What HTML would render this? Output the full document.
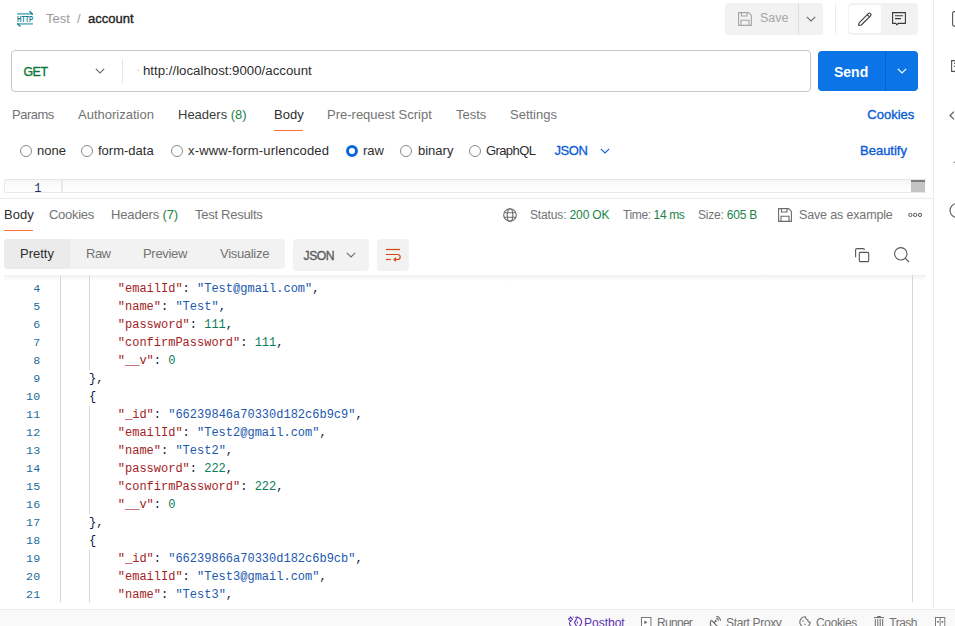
<!DOCTYPE html>
<html><head><meta charset="utf-8">
<style>
*{margin:0;padding:0;box-sizing:border-box}
html,body{width:955px;height:626px;overflow:hidden;background:#fff}
body{position:relative;font-family:"Liberation Sans",sans-serif;color:#212121}
.a{position:absolute}
.t{position:absolute;white-space:nowrap;line-height:1}
.f12{font-size:12px}
.f13{font-size:13px}
.gray{color:#737373}
.grn{color:#1a8348}
.blue{color:#0a5cd6}
svg{position:absolute;overflow:visible}
.code{position:absolute;left:0;top:0;font-family:"Liberation Mono",monospace;font-size:12px;line-height:18px;white-space:pre}
.k{color:#a32224}
.s{color:#2157ad}
.n{color:#0b7d58}
.p{color:#0b1b3f}
.ln{position:absolute;font-family:"Liberation Mono",monospace;font-size:11.6px;letter-spacing:0.25px;line-height:18px;color:#1b6c9e;text-align:right;width:40.4px;left:0}
</style></head>
<body>

<!-- ===== Top bar ===== -->
<svg style="left:12px;top:6px" width="26" height="24" viewBox="0 0 26 24">
  <rect x="5" y="6.9" width="15.9" height="1.9" fill="#78bac6"/>
  <path d="M17.6 5.2L20.6 8.4" stroke="#1f8394" stroke-width="1.5" fill="none"/>
  <text x="13" y="15.9" text-anchor="middle" font-family="Liberation Sans" font-size="8.3" font-weight="bold" fill="#137d8f" textLength="16" lengthAdjust="spacingAndGlyphs">HTTP</text>
  <rect x="5" y="16.9" width="15.9" height="1.9" fill="#78bac6"/>
  <path d="M5.3 17.4L8.4 20.6" stroke="#1f8394" stroke-width="1.5" fill="none"/>
</svg>
<div class="t f13" style="left:46px;top:12px;color:#9b9b9b">Test</div>
<div class="t f13" style="left:77px;top:12px;color:#9b9b9b">/</div>
<div class="t" style="left:88px;top:12px;font-size:13px;color:#212121;-webkit-text-stroke:0.35px #212121">account</div>

<!-- Save group -->
<div class="a" style="left:725px;top:3px;width:98px;height:32px;background:#f2f2f2;border-radius:4px"></div>
<div class="a" style="left:798px;top:3px;width:1px;height:32px;background:#e0e0e0"></div>
<svg style="left:738px;top:12px" width="14" height="14" viewBox="0 0 14 14">
  <g fill="none" stroke="#a6a6a6" stroke-width="1.1">
    <path d="M0.6 0.6H10.6L13.4 3.4V13.4H0.6Z"/>
    <path d="M3.5 0.6V4H9V0.6"/>
    <path d="M3 13.4V8.2H11V13.4"/>
  </g>
</svg>
<div class="t" style="left:760px;top:12.3px;font-size:12.5px;color:#a6a6a6">Save</div>
<svg style="left:806px;top:16px" width="10" height="6" viewBox="0 0 10 6"><path d="M0.8 0.8L5 5L9.2 0.8" fill="none" stroke="#6b6b6b" stroke-width="1.1"/></svg>
<div class="a" style="left:835px;top:3px;width:1px;height:32px;background:#ebebeb"></div>

<!-- edit/comment group -->
<div class="a" style="left:848px;top:3px;width:70px;height:32px;background:#f2f2f2;border-radius:4px"></div>
<div class="a" style="left:849px;top:5px;width:32px;height:28px;background:#fff;border-radius:3px"></div>
<svg style="left:858px;top:12px" width="14" height="14" viewBox="0 0 14 14">
  <g fill="none" stroke="#3a3a3a" stroke-width="1.1" stroke-linejoin="round">
    <path d="M0.6 13.4L1.1 10.8L10.3 1.6Q11.4 0.5 12.5 1.6Q13.6 2.7 12.5 3.8L3.3 13Z"/>
    <path d="M9.3 2.6L11.5 4.8"/>
  </g>
</svg>
<svg style="left:892px;top:12px" width="14" height="14" viewBox="0 0 14 14">
  <g fill="none" stroke="#3a3a3a" stroke-width="1.1">
    <path d="M0.6 0.6H13.4V11.4H6.2L5 12.8L3.8 11.4H0.6Z"/>
    <path d="M3 3.8H11M3 6.6H9"/>
  </g>
</svg>

<!-- right sidebar -->
<div class="a" style="left:933px;top:0;width:1px;height:609px;background:#ebebeb"></div>
<svg style="left:952px;top:11px" width="10" height="16" viewBox="0 0 10 16"><rect x="0.6" y="0.6" width="12" height="14.5" rx="1.5" fill="none" stroke="#555" stroke-width="1.1"/></svg>
<svg style="left:951px;top:60px" width="14" height="14" viewBox="0 0 14 14"><path d="M0.6 0.6H13.4V11.4H6.2L5 12.8L3.8 11.4H0.6Z M3 3.4H11 M3 6.4H9" fill="none" stroke="#555" stroke-width="1.1"/></svg>
<svg style="left:949px;top:111px" width="6" height="9" viewBox="0 0 6 9"><path d="M5 0.7L1 4.5L5 8.3" fill="none" stroke="#555" stroke-width="1.1"/></svg>
<svg style="left:952px;top:160px" width="4" height="4" viewBox="0 0 4 4"><path d="M1 3L3.5 0.8V3Z" fill="#888"/></svg>
<svg style="left:949px;top:203px" width="8" height="16" viewBox="0 0 8 16"><circle cx="8" cy="7.5" r="7" fill="none" stroke="#555" stroke-width="1.1"/></svg>

<!-- ===== URL bar ===== -->
<div class="a" style="left:11px;top:50px;width:800px;height:42px;border:1px solid #c6c6c6;border-radius:4px"></div>
<div class="t" style="left:23.4px;top:66px;font-size:12.3px;letter-spacing:-0.35px;color:#0b7a3a;-webkit-text-stroke:0.4px #0b7a3a">GET</div>
<svg style="left:95px;top:68px" width="10" height="6" viewBox="0 0 10 6"><path d="M0.8 0.8L5 5L9.2 0.8" fill="none" stroke="#6b6b6b" stroke-width="1.1"/></svg>
<div class="a" style="left:122px;top:59px;width:1px;height:24px;background:#e6e6e6"></div>
<div class="a" style="left:138px;top:70px;width:1px;height:1px;background:#aaa"></div>
<div class="t" style="left:143px;top:64px;font-size:13.25px;color:#2e2e2e">http://localhost:9000/account</div>

<!-- Send -->
<div class="a" style="left:818px;top:51px;width:100px;height:40px;background:#0b74e6;border-radius:4px"></div>
<div class="a" style="left:885px;top:51px;width:1px;height:40px;background:#0a62c8"></div>
<div class="t" style="left:834px;top:65px;font-size:14px;font-weight:bold;color:#fff">Send</div>
<svg style="left:897px;top:68px" width="10" height="6" viewBox="0 0 10 6"><path d="M0.8 0.8L5 5L9.2 0.8" fill="none" stroke="#fff" stroke-width="1.2"/></svg>

<!-- ===== Request tabs ===== -->
<div class="t f13 gray" style="left:12px;top:108px;letter-spacing:-0.5px">Params</div>
<div class="t f13 gray" style="left:78px;top:108px">Authorization</div>
<div class="t f13" style="left:178px;top:108px;color:#3b3b3b">Headers <span class="grn">(8)</span></div>
<div class="t f13" style="left:274px;top:108px;color:#2e2e2e">Body</div>
<div class="a" style="left:274px;top:130px;width:29px;height:1px;background:#ff6c37"></div>
<div class="t f13 gray" style="left:327px;top:108px">Pre-request Script</div>
<div class="t f13 gray" style="left:456px;top:108px">Tests</div>
<div class="t f13 gray" style="left:510px;top:108px">Settings</div>
<div class="t" style="left:867.3px;top:108px;font-size:13px;color:#0a5cd6;-webkit-text-stroke:0.35px #0a5cd6">Cookies</div>

<!-- Radio row -->
<div class="a" style="left:20px;top:145px;width:12px;height:12px;border:1px solid #8a8a8a;border-radius:50%"></div>
<div class="t f13" style="left:37px;top:144px;color:#2e2e2e">none</div>
<div class="a" style="left:81px;top:145px;width:12px;height:12px;border:1px solid #8a8a8a;border-radius:50%"></div>
<div class="t f13" style="left:98px;top:144px;color:#2e2e2e">form-data</div>
<div class="a" style="left:171px;top:145px;width:12px;height:12px;border:1px solid #8a8a8a;border-radius:50%"></div>
<div class="t f13" style="left:188px;top:144px;color:#2e2e2e;letter-spacing:0.15px">x-www-form-urlencoded</div>
<div class="a" style="left:346px;top:145px;width:12px;height:12px;border:3.5px solid #0b67d9;border-radius:50%"></div>
<div class="t f13" style="left:363px;top:144px;color:#2e2e2e">raw</div>
<div class="a" style="left:400px;top:145px;width:12px;height:12px;border:1px solid #8a8a8a;border-radius:50%"></div>
<div class="t f13" style="left:418px;top:144px;color:#2e2e2e">binary</div>
<div class="a" style="left:469px;top:145px;width:12px;height:12px;border:1px solid #8a8a8a;border-radius:50%"></div>
<div class="t f13" style="left:486px;top:144px;color:#2e2e2e;letter-spacing:-0.6px">GraphQL</div>
<div class="t" style="left:554.5px;top:144.3px;font-size:13px;letter-spacing:-0.45px;color:#0a5cd6;-webkit-text-stroke:0.3px #0a5cd6">JSON</div>
<svg style="left:600px;top:148px" width="10" height="6" viewBox="0 0 10 6"><path d="M0.8 0.8L5 5L9.2 0.8" fill="none" stroke="#0a5cd6" stroke-width="1.1"/></svg>
<div class="t" style="left:860px;top:144px;font-size:13px;color:#0a5cd6;-webkit-text-stroke:0.35px #0a5cd6">Beautify</div>

<!-- request editor strip -->
<div class="a" style="left:4px;top:179px;width:922px;height:14px;border-top:1px solid #e6e6e6;border-bottom:1px solid #e8e8e8;border-left:1px solid #ededed;border-radius:2px 0 0 2px;background:linear-gradient(#f5f5f5,#fdfdfd 60%)"></div>
<div class="a" style="left:61px;top:180px;width:2px;height:12px;background:#e9e9e9"></div>
<div class="t" style="left:0;top:182.5px;width:41.5px;text-align:right;font-family:'Liberation Mono',monospace;font-size:12px;color:#1c2d6b">1</div>
<div class="a" style="left:911px;top:180px;width:14px;height:12px;background:#c4c4c4;border-top:2px solid #7d7d7d"></div>

<div class="a" style="left:0;top:198px;width:933px;height:1px;background:#ebebeb"></div>

<!-- ===== Response tabs ===== -->
<div class="t f13" style="left:4px;top:208px;color:#2e2e2e">Body</div>
<div class="a" style="left:4px;top:230px;width:29px;height:1px;background:#ff6c37"></div>
<div class="t f13 gray" style="left:49px;top:208px;letter-spacing:-0.3px">Cookies</div>
<div class="t f13 gray" style="left:111px;top:208px;letter-spacing:-0.15px">Headers <span class="grn">(7)</span></div>
<div class="t f13 gray" style="left:195px;top:208px;letter-spacing:-0.27px">Test Results</div>

<svg style="left:503px;top:208px" width="14" height="14" viewBox="0 0 14 14">
  <g fill="none" stroke="#6b6b6b" stroke-width="1.1">
    <circle cx="7" cy="7" r="6.3"/>
    <ellipse cx="7" cy="7" rx="2.8" ry="6.3"/>
    <path d="M0.9 4.7H13.1M0.9 9.3H13.1"/>
  </g>
</svg>
<div class="t f12 gray" style="left:530px;top:209px;letter-spacing:-0.14px">Status: <span class="grn">200 OK</span></div>
<div class="t f12 gray" style="left:623px;top:209px;letter-spacing:-0.38px">Time: <span class="grn">14 ms</span></div>
<div class="t f12 gray" style="left:698px;top:209px;letter-spacing:-0.2px">Size: <span class="grn">605 B</span></div>
<svg style="left:778px;top:208px" width="14" height="14" viewBox="0 0 14 14">
  <g fill="none" stroke="#6b6b6b" stroke-width="1.1">
    <path d="M0.6 0.6H10.6L13.4 3.4V13.4H0.6Z"/>
    <path d="M3.5 0.6V4H9V0.6"/>
    <path d="M3 13.4V8.2H11V13.4"/>
  </g>
</svg>
<div class="t gray" style="left:799px;top:208.5px;font-size:12.5px;letter-spacing:-0.15px">Save as example</div>
<svg style="left:908px;top:212px" width="15" height="6" viewBox="0 0 15 6">
  <g fill="none" stroke="#555" stroke-width="1">
    <circle cx="2.4" cy="2.9" r="1.65"/><circle cx="7.2" cy="2.9" r="1.65"/><circle cx="12" cy="2.9" r="1.65"/>
  </g>
</svg>

<!-- Pretty/Raw/Preview/Visualize -->
<div class="a" style="left:4px;top:239px;width:281px;height:30px;background:#f2f2f2;border-radius:4px"></div>
<div class="a" style="left:4px;top:239px;width:66px;height:30px;background:#ebebeb;border-radius:4px 0 0 4px"></div>
<div class="t f13" style="left:20px;top:247px;color:#2e2e2e">Pretty</div>
<div class="t f13 gray" style="left:86px;top:247px;letter-spacing:-0.5px">Raw</div>
<div class="t f13 gray" style="left:143px;top:247px;letter-spacing:-0.3px">Preview</div>
<div class="t f13 gray" style="left:220px;top:247px;letter-spacing:-0.3px">Visualize</div>

<div class="a" style="left:293px;top:239px;width:76px;height:32px;background:#f2f2f2;border-radius:4px"></div>
<div class="t" style="left:303.5px;top:250.3px;font-size:12.2px;letter-spacing:-0.45px;color:#585858;-webkit-text-stroke:0.3px #585858">JSON</div>
<svg style="left:346px;top:252px" width="10" height="6" viewBox="0 0 10 6"><path d="M0.8 0.8L5 5L9.2 0.8" fill="none" stroke="#6b6b6b" stroke-width="1.1"/></svg>

<div class="a" style="left:377px;top:239px;width:32px;height:32px;background:#f2f2f2;border-radius:4px"></div>
<svg style="left:385px;top:248px" width="16" height="15" viewBox="0 0 16 15">
  <g fill="none" stroke="#d4450f" stroke-width="1.2">
    <path d="M0.9 1.5H15"/>
    <path d="M0.9 6.5H12.6Q15.2 6.5 15.2 9Q15.2 11.5 12.6 11.5H9.3"/>
    <path d="M10.9 9.6L9.1 11.5L10.9 13.4"/>
    <path d="M0.9 11.5H5.8"/>
  </g>
</svg>

<svg style="left:855px;top:248px" width="15" height="14" viewBox="0 0 15 14">
  <g fill="none" stroke="#555" stroke-width="1.1" stroke-linejoin="round">
    <path d="M0.6 9.3V2.1Q0.6 0.6 2.1 0.6H8.2Q9.4 0.6 9.4 1.9"/>
    <rect x="4.3" y="4.4" width="9.4" height="9.2" rx="1"/>
  </g>
</svg>
<svg style="left:894px;top:247px" width="16" height="16" viewBox="0 0 16 16">
  <g fill="none" stroke="#555" stroke-width="1.1">
    <circle cx="6.8" cy="6.8" r="6.2"/>
    <path d="M11.2 11.2L15 15"/>
  </g>
</svg>

<!-- ===== Code area ===== -->
<div class="a" style="left:4px;top:275px;width:922px;height:6px;background:linear-gradient(#ededed,#f4f4f4 17%,#fff)"></div>
<div class="a" style="left:912px;top:275px;width:1px;height:327px;background:#d6d6d6"></div>
<div class="a" id="codewrap" style="left:0;top:276px;width:912px;height:326px;overflow:hidden">
  <div class="a" style="left:60px;top:0;width:1px;height:326px;background:#d4d4d4"></div>
  <div class="a" style="left:89px;top:0;width:1px;height:94px;background:#d4d4d4"></div>
  <div class="a" style="left:89px;top:130px;width:1px;height:108px;background:#d4d4d4"></div>
  <div class="a" style="left:89px;top:274px;width:1px;height:52px;background:#d4d4d4"></div>
  <div class="ln" style="top:4px">4<br>5<br>6<br>7<br>8<br>9<br>10<br>11<br>12<br>13<br>14<br>15<br>16<br>17<br>18<br>19<br>20<br>21</div>
  <div class="code" style="left:60.2px;top:4px">        <span class="k">"emailId"</span><span class="p">: </span><span class="s">"Test@gmail.com"</span><span class="p">,</span>
        <span class="k">"name"</span><span class="p">: </span><span class="s">"Test"</span><span class="p">,</span>
        <span class="k">"password"</span><span class="p">: </span><span class="n">111</span><span class="p">,</span>
        <span class="k">"confirmPassword"</span><span class="p">: </span><span class="n">111</span><span class="p">,</span>
        <span class="k">"__v"</span><span class="p">: </span><span class="n">0</span>
    <span class="p">},</span>
    <span class="p">{</span>
        <span class="k">"_id"</span><span class="p">: </span><span class="s">"66239846a70330d182c6b9c9"</span><span class="p">,</span>
        <span class="k">"emailId"</span><span class="p">: </span><span class="s">"Test2@gmail.com"</span><span class="p">,</span>
        <span class="k">"name"</span><span class="p">: </span><span class="s">"Test2"</span><span class="p">,</span>
        <span class="k">"password"</span><span class="p">: </span><span class="n">222</span><span class="p">,</span>
        <span class="k">"confirmPassword"</span><span class="p">: </span><span class="n">222</span><span class="p">,</span>
        <span class="k">"__v"</span><span class="p">: </span><span class="n">0</span>
    <span class="p">},</span>
    <span class="p">{</span>
        <span class="k">"_id"</span><span class="p">: </span><span class="s">"66239866a70330d182c6b9cb"</span><span class="p">,</span>
        <span class="k">"emailId"</span><span class="p">: </span><span class="s">"Test3@gmail.com"</span><span class="p">,</span>
        <span class="k">"name"</span><span class="p">: </span><span class="s">"Test3"</span><span class="p">,</span></div>
</div>

<!-- ===== Status bar ===== -->
<div class="a" style="left:0;top:609px;width:955px;height:17px;background:#f9f9f9;border-top:1px solid #ececec"></div>
<svg style="left:564px;top:610px" width="20" height="16" viewBox="0 0 20 16">
  <g fill="none" stroke="#5e31b3" stroke-width="1.1">
    <path d="M6.5 6.6Q6.9 8.7 8.9 9.2Q6.9 9.7 6.5 11.8Q6.1 9.7 4.1 9.2Q6.1 8.7 6.5 6.6Z"/>
    <path d="M11.2 7.4A4.6 4.6 0 0 1 14.2 16.6"/>
    <path d="M5.3 12.3Q5.5 14.5 6.8 16.2"/>
    <path d="M13 8.2L10.4 12.6L12.8 16.5"/>
    <path d="M13.4 11.6V13.6"/>
  </g>
  <circle cx="9.3" cy="7" r="0.6" fill="#5e31b3"/>
</svg>
<div class="t f12" style="left:584px;top:617px;color:#5e31b3">Postbot</div>
<svg style="left:641px;top:617px" width="11" height="11" viewBox="0 0 11 11">
  <rect x="0.5" y="0.5" width="9.4" height="10" fill="#fff" stroke="#777" stroke-width="1"/>
  <path d="M3.4 3.4L6.4 5.3L3.4 7.2Z" fill="#666"/>
</svg>
<div class="t f12 gray" style="left:657px;top:617px;letter-spacing:-0.7px">Runner</div>
<svg style="left:704px;top:608px" width="20" height="18" viewBox="0 0 20 18">
  <g fill="none" stroke="#666" stroke-width="1.1">
    <path d="M7.4 12.1Q5.4 14.8 7.2 18.5"/>
    <path d="M7.4 12.1L13.2 18.2"/>
    <path d="M9.8 15L11.7 13.1"/>
    <path d="M12.2 8.3Q15.9 8.9 16.6 12.6"/>
    <path d="M12.2 10.4Q14.2 10.7 14.6 12.6"/>
  </g>
  <circle cx="11.8" cy="13" r="0.9" fill="#666"/>
</svg>
<div class="t f12 gray" style="left:726px;top:617px;letter-spacing:-0.35px">Start Proxy</div>
<svg style="left:799px;top:616px" width="12" height="12" viewBox="0 0 12 12">
  <g fill="none" stroke="#6b6b6b" stroke-width="1.1">
    <path d="M6 0.8A5.2 5.2 0 1 0 11.2 6.2A2 2 0 0 1 8.8 3.8A2 2 0 0 1 6.8 1.2Z"/>
  </g>
  <circle cx="4" cy="5" r="0.7" fill="#6b6b6b"/><circle cx="6" cy="8.3" r="0.7" fill="#6b6b6b"/>
</svg>
<div class="t f12 gray" style="left:816px;top:617px;letter-spacing:-0.35px">Cookies</div>
<svg style="left:874px;top:616px" width="10" height="11" viewBox="0 0 10 11">
  <g fill="none" stroke="#6b6b6b" stroke-width="1">
    <path d="M0 1.6H10M3.5 1.6V0.5H6.5V1.6"/>
    <path d="M1.3 3.1V11M3.8 3.1V11M6.2 3.1V11M8.7 3.1V11"/>
  </g>
</svg>
<div class="t f12 gray" style="left:889.3px;top:617px;letter-spacing:-0.5px">Trash</div>
<svg style="left:935px;top:617px" width="11" height="10" viewBox="0 0 11 10">
  <g fill="#fff" stroke="#7a7a7a" stroke-width="1">
    <rect x="0.5" y="0.5" width="9.3" height="10"/>
    <path d="M5.15 0.5V10"/>
  </g>
  <circle cx="2.9" cy="4.8" r="0.9" fill="#555"/><circle cx="7.4" cy="4.8" r="0.9" fill="#555"/>
</svg>
</body></html>
